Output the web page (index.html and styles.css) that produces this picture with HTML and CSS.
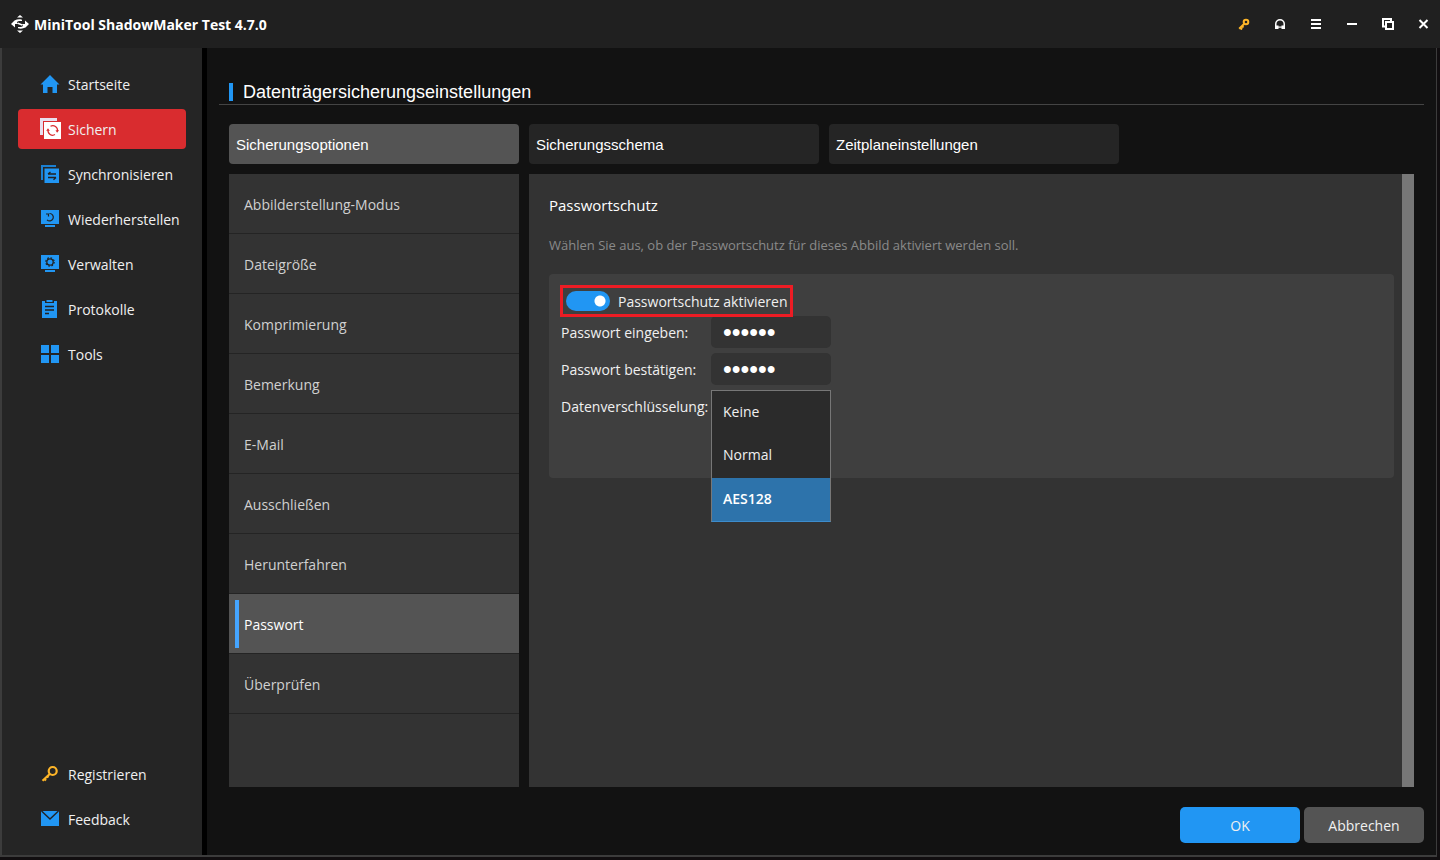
FILE: index.html
```html
<!DOCTYPE html>
<html lang="de">
<head>
  <meta charset="UTF-8">
  <meta name="viewport" content="width=device-width, initial-scale=1.0">
  <title>MiniTool ShadowMaker Test 4.7.0</title>
  <link rel="stylesheet" href="styles.css">
</head>
<body>
  <header class="titlebar">
    <svg class="logo" viewBox="0 0 18 18" fill="#fff">
      <path d="M9 0 12 2.500H6zM9 18 6 15.500h6z"/>
      <path d="M0 9 3.500 5.500C6 4.300 8.500 4 11 4.800V6C8.500 5.800 6 6.200 6 7.500 6 8.300 6.500 8.500 7 9H4V12.500z"/>
      <path d="M18 9 14.500 12.500C12 13.700 9.500 14 7 13.200V12C9.500 12.200 12 11.800 12 10.500 12 9.700 11.500 9.500 11 9H14V5.500z"/>
      <path d="m7 7.500 5 2-1 1.300-5-2z"/>
    </svg>
    <h1>MiniTool ShadowMaker Test 4.7.0</h1>
    <div class="window-buttons">
      <button aria-label="Registrieren">
        <svg viewBox="0 0 12 12" fill="none" stroke="#fdb528" stroke-width="2"><circle cx="8" cy="4" r="2.300"/><path d="M6.300 5.700 1.200 10.800M2 9.500l2 2M4 8l1.500 1.500"/></svg>
      </button>
      <button aria-label="Support">
        <svg viewBox="0 0 12 12" fill="#fff"><path d="M1 11V6a5 5 0 0 1 10 0v5H7.500V7.500h2V6a3.500 3.500 0 0 0-7 0v1.500h2V11z"/><path d="M4 8.500h4v1.200H4z"/></svg>
      </button>
      <button aria-label="Menü">
        <svg viewBox="0 0 12 12" fill="#fff"><path d="M1 1h10v2H1zM1 5h10v2H1zM1 9h10v2H1z"/></svg>
      </button>
      <button aria-label="Minimieren">
        <svg viewBox="0 0 12 12" fill="#fff"><path d="M1 5h10v2H1z"/></svg>
      </button>
      <button aria-label="Maximieren">
        <svg viewBox="0 0 12 12" fill="none" stroke="#fff"><path d="M3 8.500H1V1h8v2" stroke-width="2"/><path d="M4 4h7v7H4z" stroke-width="2"/></svg>
      </button>
      <button aria-label="Schließen">
        <svg viewBox="0 0 12 12" fill="none" stroke="#fff" stroke-width="2"><path d="m1.500 2 8 8m0-8-8 8"/></svg>
      </button>
    </div>
  </header>

  <div class="window">
    <!-- Main navigation -->
    <nav class="sidebar">
      <a href="#">
        <svg viewBox="0 -1 20 20" fill="#2196f3"><path d="M10 0 .500 9.500H3V18h4.500v-6h5v6H17V9.500h2.500z"/></svg>
        <span>Startseite</span>
      </a>
      <a href="#" class="active">
        <svg class="large" viewBox="0 0 22 22"><path d="M0 0h17v3H3v14H0z" fill="#e8dfee"/><path d="M4 4h17v17H4z" fill="#fff"/><g fill="none" stroke="#d92c2f" stroke-width="1.200"><path d="M10.500 8.300a4.700 4.700 0 0 1 7 4.700M15 16.600A4.700 4.700 0 0 1 8 12"/></g><path d="M15.500 12.200h3.600l-2 2.500zM6.200 12.800h3.600l-1.800-2.500z" fill="#d92c2f"/></svg>
        <span>Sichern</span>
      </a>
      <a href="#">
        <svg viewBox="0 0 20 20"><path d="M1 1h15v2H3v13H1z" fill="#1b80d2"/><path d="M4.500 4.500H19V19H4.500z" fill="#2196f3"/><path d="M16 13.500H8M13.500 15.800l2.500-2.300M8 10h8M8 10l2.500-2" fill="none" stroke="#222" stroke-width="1.300"/></svg>
        <span>Synchronisieren</span>
      </a>
      <a href="#">
        <svg viewBox="0 -1 20 20"><path d="M1 0h18v14H1zM5 15h10v2H5z" fill="#2196f3"/><path d="M9.500 3.500a3.700 3.700 0 1 1-2.500 6.300M6 4h2.500v2.500" fill="none" stroke="#222" stroke-width="1.200"/></svg>
        <span>Wiederherstellen</span>
      </a>
      <a href="#">
        <svg viewBox="0 -1 20 20"><path d="M1 0h18v14H1zM5 15h10v2H5z" fill="#2196f3"/><g fill="none" stroke="#222"><circle cx="10" cy="7" r="3.200" stroke-width="1.300"/><circle cx="10" cy="7" r="4.200" stroke-width="1.200" stroke-dasharray="1.650"/></g></svg>
        <span>Verwalten</span>
      </a>
      <a href="#">
        <svg viewBox="0 -1 20 20"><path d="M2 1h3v2h9V1h3v17H2z" fill="#2196f3"/><path d="M6.500 0h6v2h-6z" fill="#2196f3"/><path d="M5 6.500h9M5 10h9M5 13.500h4" stroke="#222" stroke-width="1.300"/></svg>
        <span>Protokolle</span>
      </a>
      <a href="#">
        <svg viewBox="0 -1 20 20" fill="#2196f3"><path d="M1 0h8v8H1zM11 0h8v8h-8zM1 10h8v8H1zM11 10h8v8h-8z"/></svg>
        <span>Tools</span>
      </a>
      <a href="#" class="bottom">
        <svg viewBox="0 0 20 20" fill="none" stroke="#fdb528" stroke-width="2.200"><circle cx="12.700" cy="7" r="4"/><path d="m10 9.800-7.500 7M4 14.500l2 2M7 12l1.500 1.500"/></svg>
        <span>Registrieren</span>
      </a>
      <a href="#">
        <svg viewBox="0 0 20 20"><path d="M1 2h18v15H1z" fill="#2196f3"/><path d="m1.500 2 8.500 8 8.500-8" fill="none" stroke="#222" stroke-width="1.400"/></svg>
        <span>Feedback</span>
      </a>
    </nav>

    <main class="content">
      <div class="heading">
        <h2>Datenträgersicherungseinstellungen</h2>
      </div>

      <div class="tabs">
        <button class="active">Sicherungsoptionen</button>
        <button>Sicherungsschema</button>
        <button>Zeitplaneinstellungen</button>
      </div>

      <div class="panels">
        <!-- Option categories -->
        <nav class="options">
          <a href="#">Abbilderstellung-Modus</a>
          <a href="#">Dateigröße</a>
          <a href="#">Komprimierung</a>
          <a href="#">Bemerkung</a>
          <a href="#">E-Mail</a>
          <a href="#">Ausschließen</a>
          <a href="#">Herunterfahren</a>
          <a href="#" class="active">Passwort</a>
          <a href="#">Überprüfen</a>
        </nav>

        <section class="settings">
          <h3>Passwortschutz</h3>
          <p>Wählen Sie aus, ob der Passwortschutz für dieses Abbild aktiviert werden soll.</p>
          <form class="card">
            <label class="toggle">
              <input type="checkbox" checked>
              <span>Passwortschutz aktivieren</span>
            </label>
            <div class="fields">
              <label for="password">Passwort eingeben:</label>
              <input type="password" id="password" value="secret">
              <label for="confirm">Passwort bestätigen:</label>
              <input type="password" id="confirm" value="secret">
              <label for="encryption">Datenverschlüsselung:</label>
              <div class="dropdown">
                <select id="encryption" size="3">
                  <option>Keine</option>
                  <option>Normal</option>
                  <option selected>AES128</option>
                </select>
              </div>
            </div>
          </form>
        </section>
        <div class="scrollbar"></div>
      </div>

      <div class="actions">
        <button class="ok">OK</button>
        <button>Abbrechen</button>
      </div>
    </main>
  </div>
</body>
</html>
```

FILE: styles.css
```css
/* Reset styles */
* {
  box-sizing: border-box;
  margin: 0;
  padding: 0;
}

/* Global styles */
body {
  display: flex;
  flex-direction: column;
  min-height: 100vh;
  padding-bottom: 3px;
  background-color: #110e10;
  color: #f0f0f0;
  font-family: "Open Sans", "Noto Sans", sans-serif;
  font-size: 14px;
  line-height: 20px;
}

a {
  color: inherit;
  text-decoration: none;
}

button,
input,
select {
  border: none;
  color: inherit;
  font: inherit;
}

button {
  cursor: pointer;
}

/* Title bar */
.titlebar {
  display: flex;
  align-items: center;
  height: 48px;
  padding: 0 4px 0 11px;
  background-color: #202020;
}

.titlebar h1 {
  margin-left: 5px;
  padding-top: 2px;
  color: #fff;
  font-size: 14px;
}

.logo {
  width: 18px;
  height: 18px;
}

.window-buttons {
  display: flex;
  gap: 12px;
  margin-left: auto;
}

.window-buttons button {
  display: flex;
  align-items: center;
  justify-content: center;
  width: 24px;
  height: 24px;
  background: none;
}

.window-buttons svg {
  width: 12px;
  height: 12px;
}

.window {
  display: flex;
  flex: 1;
  margin-right: 3px;
  border: solid #3c3c3c;
  border-width: 0 1px 2px 2px;
  background-color: #121212;
}

/* Sidebar */
.sidebar {
  display: flex;
  flex-direction: column;
  gap: 5px;
  flex: none;
  width: 205px;
  padding: 16px;
  border-right: 5px solid #000;
  background-color: #252525;
}

.sidebar a {
  display: flex;
  align-items: center;
  gap: 8px;
  height: 40px;
  padding-left: 22px;
  border-radius: 4px;
  white-space: nowrap;
}

.sidebar span,
.toggle span {
  padding-top: 2px;
}

.sidebar svg {
  flex: none;
  width: 20px;
  height: 20px;
}

.sidebar svg.large {
  width: 22px;
  height: 22px;
  margin-right: -2px;
}

.sidebar .active {
  background-color: #d92c2f;
}

.sidebar .bottom {
  margin-top: auto;
}

/* Content */
.content {
  display: flex;
  flex-direction: column;
  flex: 1;
  padding: 32px 12px 12px;
}

.heading {
  padding: 3px 10px;
  border-bottom: 1px solid #444;
}

.heading h2 {
  padding-left: 10px;
  border-left: 4px solid #2196f3;
  color: #fff;
  font-family: "Liberation Sans", Arial, sans-serif;
  font-size: 18px;
  font-weight: normal;
  line-height: 18px;
}

/* Tabs */
.tabs {
  display: flex;
  gap: 10px;
  padding: 19px 10px 10px;
}

.tabs button {
  width: 290px;
  height: 40px;
  padding: 2px 7px 0;
  border-radius: 4px;
  background-color: #252525;
  color: #fff;
  font-family: "Liberation Sans", Arial, sans-serif;
  font-size: 15px;
  text-align: left;
}

.tabs .active {
  background-color: #545454;
}

.panels {
  display: flex;
  flex: 1;
  padding: 0 10px;
}

/* Option categories */
.options {
  width: 290px;
  margin-right: 10px;
  background-color: #333;
  color: #d0d0d0;
}

.options a {
  display: flex;
  height: 60px;
  padding: 6px 6px 5px;
  border-bottom: 1px solid #242424;
  line-height: 50px;
}

.options a::before {
  content: "";
  width: 4px;
  height: 48px;
  margin-right: 5px;
}

.options .active {
  background-color: #545454;
  color: #fff;
}

.options .active::before {
  background-color: #45a5ff;
}

/* Password settings */
.settings {
  flex: 1;
  padding: 19px 8px 20px 20px;
  background-color: #333;
}

.settings h3 {
  margin-bottom: 18px;
  color: #fff;
  font-size: 15px;
  font-weight: normal;
  line-height: 24px;
}

.settings p {
  margin-bottom: 19px;
  color: #8a8a8a;
  font-size: 13px;
}

.card {
  min-height: 204px;
  padding: 11px;
  border-radius: 4px;
  background-color: #3f3f3f;
}

.toggle {
  position: relative;
  display: flex;
  align-items: center;
  gap: 8px;
  width: fit-content;
  height: 32px;
  margin-bottom: -1px;
  padding: 0 3px;
  border: 3px solid #ed1c24;
}

.toggle input {
  appearance: none;
  width: 44px;
  height: 20px;
  border-radius: 10px;
  background: radial-gradient(circle at 34px 10px, #fff 5px, #2196f3 6px);
}

.fields {
  display: grid;
  grid-template-columns: 150px 120px;
  grid-auto-rows: 32px;
  gap: 5px 0;
  padding-left: 1px;
}

.fields label {
  line-height: 34px;
  white-space: nowrap;
}

.fields input {
  width: 120px;
  height: 32px;
  padding: 0 12px;
  border-radius: 5px;
  background-color: #333;
  color: #fff;
  font-family: "Liberation Sans", Arial, sans-serif;
  font-size: 25px;
}

/* Open encryption list */
.dropdown {
  position: relative;
}

.dropdown select {
  position: absolute;
  top: 0;
  left: 0;
  width: 120px;
  height: 132px;
  overflow: hidden;
  border: 1px solid #777;
  border-bottom-color: #3d8ccc;
  border-radius: 0;
  background-color: #2b2b2b;
  outline: none;
}

.dropdown option {
  height: 44px;
  padding: 11px 11px 0;
  line-height: 22px;
}

.dropdown option:first-child {
  height: 43px;
}

.dropdown option:checked {
  background: linear-gradient(#2d73ab, #2d73ab);
  font-weight: 600;
  -webkit-text-fill-color: #fff;
}

.scrollbar {
  width: 12px;
  background-color: #777;
}

/* Dialog buttons */
.actions {
  display: flex;
  justify-content: flex-end;
  gap: 4px;
  padding-top: 20px;
}

.actions button {
  width: 120px;
  height: 36px;
  padding-top: 2px;
  border-radius: 5px;
  background-color: #545454;
}

.actions .ok {
  background-color: #2196f3;
}
```
